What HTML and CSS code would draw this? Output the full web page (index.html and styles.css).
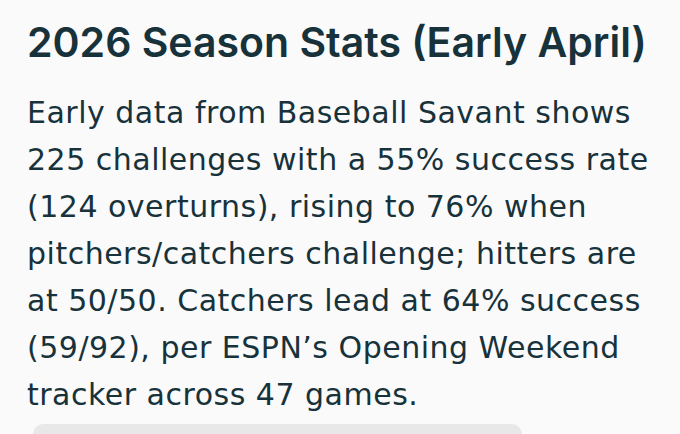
FILE: index.html
```html
<!DOCTYPE html>
<html lang="en">
<head>
<meta charset="utf-8">
<link rel="stylesheet" href="styles.css">
</head>
<body>
<main class="content">
  <h2 class="title">2026 Season Stats (Early April)</h2>
  <p class="body-text">Early data from Baseball Savant shows 225 challenges with a 55% success rate (124 overturns), rising to 76% when pitchers/catchers challenge; hitters are at 50/50. Catchers lead at 64% success (59/92), per ESPN’s Opening Weekend tracker across 47 games.</p>
  <div class="next-block"></div>
</main>
</body>
</html>
```
FILE: styles.css
```css
html, body {
  margin: 0;
  padding: 0;
  background: #fafafa;
}
body {
  width: 680px;
  height: 434px;
  overflow: hidden;
  color: #17323a;
}
.content {
  padding: 18px 0 0 27px;
  width: 635px;
}
.title {
  margin: 0;
  font-family: Inter, "Noto Sans", sans-serif;
  font-size: 41px;
  line-height: 48px;
  font-weight: 600;
  letter-spacing: 0;
}
.body-text {
  margin: 23px 0 0 0;
  font-family: "DejaVu Sans", Inter, sans-serif;
  font-size: 30px;
  line-height: 47px;
  font-weight: 400;
  letter-spacing: 0.5px;
}
.next-block {
  margin: 6px 0 0 6px;
  width: 489px;
  height: 10px;
  border-radius: 10px 10px 0 0;
  background: #e8e8e8;
}
```
